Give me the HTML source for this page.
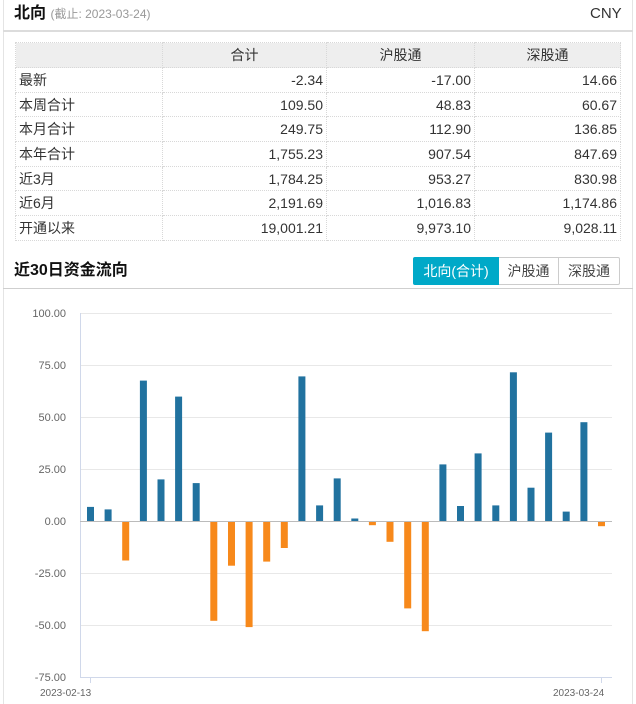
<!DOCTYPE html>
<html><head><meta charset="utf-8"><style>
*{margin:0;padding:0;box-sizing:border-box}
body{width:636px;height:704px;background:#fff;font-family:"Liberation Sans","Noto Sans CJK SC",sans-serif;position:relative;overflow:hidden;color:#333}
.abs{position:absolute}
table{border-collapse:collapse;position:absolute;left:15px;top:42px;width:606px;font-size:14px;color:#333}
td{border:1px dotted #d8d8d8;height:24.7px;padding:0 3px;text-align:right;line-height:22px}
td:first-child{text-align:left}
tr.h td{background:#eeeeee;text-align:center;height:25px}
</style></head><body>
<div class="abs" style="left:3px;top:0;width:630px;height:704px;border-left:1px solid #e4e4e4;border-right:1px solid #e4e4e4"></div>
<div class="abs" style="left:14px;top:3px;font-size:16px;font-weight:bold;color:#111;line-height:22px">北向 <span style="font-size:12px;font-weight:normal;color:#999">(截止: 2023-03-24)</span></div>
<div class="abs" style="left:590px;top:4px;font-size:15px;color:#333;line-height:20px">CNY</div>
<div class="abs" style="left:3px;top:30px;width:630px;height:2px;background:#dcdcdc"></div>
<table>
<tr class="h"><td style="width:147px"></td><td style="width:164px">合计</td><td style="width:148px">沪股通</td><td>深股通</td></tr>
<tr><td>最新</td><td>-2.34</td><td>-17.00</td><td>14.66</td></tr>
<tr><td>本周合计</td><td>109.50</td><td>48.83</td><td>60.67</td></tr>
<tr><td>本月合计</td><td>249.75</td><td>112.90</td><td>136.85</td></tr>
<tr><td>本年合计</td><td>1,755.23</td><td>907.54</td><td>847.69</td></tr>
<tr><td>近3月</td><td>1,784.25</td><td>953.27</td><td>830.98</td></tr>
<tr><td>近6月</td><td>2,191.69</td><td>1,016.83</td><td>1,174.86</td></tr>
<tr><td>开通以来</td><td>19,001.21</td><td>9,973.10</td><td>9,028.11</td></tr>
</table>
<div class="abs" style="left:14px;top:260px;font-size:16px;font-weight:bold;color:#111;line-height:22px">近30日资金流向</div>
<div class="abs" style="left:413px;top:257px;width:86px;height:28px;background:#00a9c8;color:#fff;font-size:14px;text-align:center;line-height:28px;border-radius:2px 0 0 2px">北向(合计)</div>
<div class="abs" style="left:499px;top:257px;width:60px;height:28px;border:1px solid #ccc;border-left:none;font-size:14px;text-align:center;line-height:26px;color:#444">沪股通</div>
<div class="abs" style="left:559px;top:257px;width:61px;height:28px;border:1px solid #ccc;border-left:none;font-size:14px;text-align:center;line-height:26px;color:#444;border-radius:0 2px 2px 0">深股通</div>
<div class="abs" style="left:3px;top:288px;width:630px;height:1px;background:#cfcfcf"></div>
<svg class="abs" style="left:0;top:0" width="636" height="704" font-family="Liberation Sans, sans-serif" font-size="11" fill="#666">
<g stroke="#e8e8e8" stroke-width="1">
<line x1="80" x2="612" y1="313.5" y2="313.5"/><line x1="80" x2="612" y1="365.5" y2="365.5"/><line x1="80" x2="612" y1="417.5" y2="417.5"/><line x1="80" x2="612" y1="469.5" y2="469.5"/><line x1="80" x2="612" y1="573.5" y2="573.5"/><line x1="80" x2="612" y1="625.5" y2="625.5"/>
</g>
<line x1="80.5" x2="80.5" y1="313" y2="677" stroke="#d0d8ea"/>
<line x1="80" x2="612" y1="677.5" y2="677.5" stroke="#d0d8ea"/>
<line x1="90.5" x2="90.5" y1="677" y2="683" stroke="#d0d8ea"/>
<line x1="601.5" x2="601.5" y1="677" y2="683" stroke="#d0d8ea"/>
<g text-anchor="end">
<text x="66" y="317">100.00</text><text x="66" y="369">75.00</text><text x="66" y="421">50.00</text><text x="66" y="473">25.00</text><text x="66" y="525">0.00</text><text x="66" y="577">-25.00</text><text x="66" y="629">-50.00</text><text x="66" y="681">-75.00</text>
</g>
<text x="40" y="696" font-size="10">2023-02-13</text>
<text x="553" y="696" font-size="10">2023-03-24</text>
<g id="bars"></g>
<line x1="80" x2="612" y1="521.5" y2="521.5" stroke="#bbb"/>
</svg>
<script>
var v=[6.8,5.6,-19,67.5,20,59.8,18.2,-48,-21.5,-51,-19.5,-13,69.5,7.5,20.5,1.2,-2,-10,-42,-53,27.2,7.2,32.5,7.5,71.5,16,42.5,4.5,47.5,-2.5];
var g=document.getElementById('bars'),s='';
for(var i=0;i<30;i++){var x=87+i*17.62,h=Math.abs(v[i])*2.08,y=v[i]>0?521-h:521;
s+='<rect x="'+x.toFixed(1)+'" y="'+y.toFixed(1)+'" width="7" height="'+h.toFixed(1)+'" fill="'+(v[i]>0?'#21729f':'#f7891b')+'"/>';}
g.innerHTML=s;
</script>
</body></html>
